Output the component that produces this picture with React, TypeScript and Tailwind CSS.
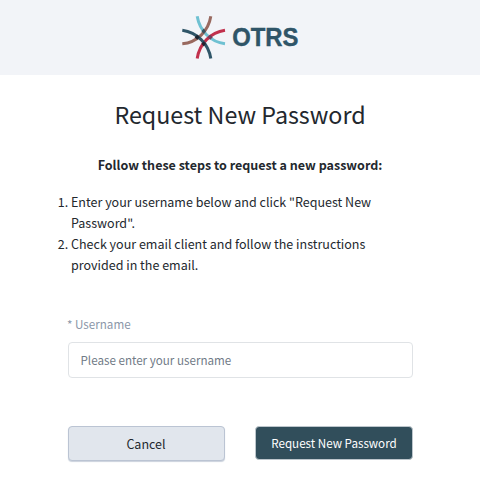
function Logo() {
  return (
    <svg width="128" height="58" viewBox="176 8 128 58" className="mb-0.5 block overflow-visible" aria-label="OTRS">
      <g fill="none" strokeWidth="3">
        <path d="M197.2 16.3C199.5 30.5 210.5 42 225 43.7" stroke="#6fc1d2" />
        <path d="M210.8 16.3C208.5 31 197 42.5 182.3 43.7" stroke="#99695f" />
        <path d="M225 30.3C210.5 32.5 199.5 43.5 197.2 58.5" stroke="#c1304c" />
        <path d="M182.3 30.3C197 32.5 208.5 43.5 210.8 58.5" stroke="#2f5568" />
      </g>
      <path d="M203.7 28.6l2.2 2.6-2.2 2.6-2.2-2.6z" fill="#38545f" />
      <path d="M197.2 34.8l2.6 2.5-2.6 2.4-2.6-2.4z" fill="#1d232e" />
      <path d="M210.2 34.8l2.6 2.5-2.6 2.4-2.6-2.4z" fill="#713f5b" />
      <path d="M203.7 41.2l2.2 2.6-2.2 2.6-2.2-2.6z" fill="#26202e" />
      <text x="232.2" y="45.8" fontSize="25" fontWeight="700" textLength="66.3" lengthAdjust="spacingAndGlyphs" fill="#2f5568" stroke="#2f5568" strokeWidth="0.4" className="font-['Liberation_Sans',Arial,sans-serif]">OTRS</text>
    </svg>
  );
}

export default function App() {
  return (
    <div className="h-[477px] w-[480px] overflow-hidden bg-white font-['Noto_Sans_CJK_SC','Noto_Sans',sans-serif] text-[12.53px] leading-[21px] text-[#23282e]">
      <header className="flex h-[75px] items-center justify-center bg-[#f2f4f8]">
        <Logo />
      </header>
      <main className="px-[68px] pt-[22px]">
        <h1 className="text-center text-[23.27px] leading-[34px] whitespace-nowrap">Request New Password</h1>
        <p className="mt-[23px] text-center font-bold whitespace-nowrap">Follow these steps to request a new password:</p>
        <ol className="mt-4 ml-[3px] list-outside list-decimal">
          <li>Enter your username below and click "Request New<br />Password".</li>
          <li>Check your email client and follow the instructions<br />provided in the email.</li>
        </ol>
        <label className="mt-[38px] -ml-px block text-[11.64px] text-[#8b97a9]" htmlFor="username">* Username</label>
        <input id="username" placeholder="Please enter your username" className="mt-2 block h-9 w-[345px] rounded border border-[#e0e3e6] bg-white px-[11.5px] pb-0.5 text-[11.64px] placeholder:text-[#717b87]" />
        <div className="mt-12 flex w-[345px] justify-between">
          <button className="h-[35px] w-[157px] rounded border border-[#bbc4d3] bg-[#e1e6ed] pr-px shadow-[0_1px_1px_#cbd2dd]">Cancel</button>
          <button className="h-[34px] w-[158px] rounded border border-[#bdc6cc] bg-[#314e5b] pb-px text-[11.64px] text-white">Request New Password</button>
        </div>
      </main>
    </div>
  );
}
